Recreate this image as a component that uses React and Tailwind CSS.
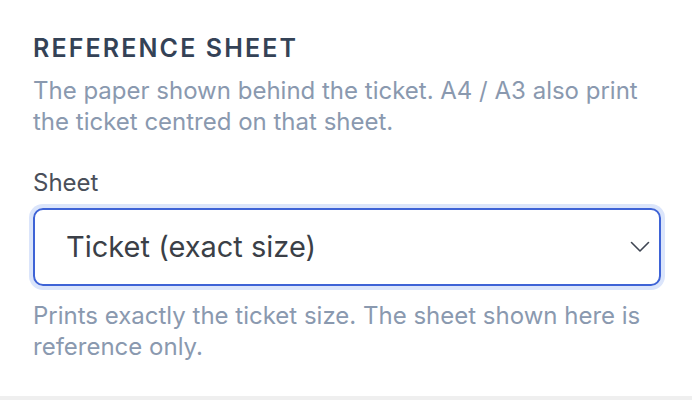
import React from "react";

function Chevron() {
  return (
    <svg width="20" height="12" viewBox="0 0 20 12" fill="none" className="text-[#3f4653]">
      <path d="M1.5 1.5l8.5 8.5 8.5-8.5" stroke="currentColor" strokeWidth="1.6" strokeLinecap="round" strokeLinejoin="round" />
    </svg>
  );
}

export default function App() {
  return (
    <div className="w-[692px] h-[400px] bg-white flex flex-col font-['Inter',sans-serif]">
      <div className="flex-1 px-[33px] pt-[33px]">
        <h2 className="text-[25px] leading-[30px] font-semibold tracking-[0.085em] text-[#344256]">
          REFERENCE SHEET
        </h2>
        <p className="mt-[12px] text-[24px] leading-[31px] text-[#8a99af]">
          The paper shown behind the ticket. A4 / A3 also print the ticket centred on that sheet.
        </p>
        <label className="mt-[31px] block text-[24px] leading-[30px] text-[#4a4f5a]">Sheet</label>
        <div className="mt-[10px] w-[628px] h-[78px] rounded-[10px] border-2 border-[#3e63d6] ring-4 ring-[#dbe5fb] flex items-center justify-between pl-[31px] pr-[9px]">
          <span className="text-[29px] text-[#3b3f47]">Ticket (exact size)</span>
          <Chevron />
        </div>
        <p className="mt-[14px] text-[24px] leading-[31px] text-[#8a99af]">
          Prints exactly the ticket size. The sheet shown here is reference only.
        </p>
      </div>
      <div className="h-[4px] bg-[#efefef]" />
    </div>
  );
}
